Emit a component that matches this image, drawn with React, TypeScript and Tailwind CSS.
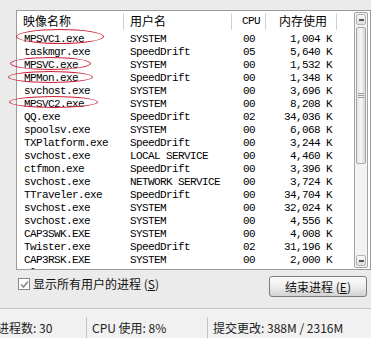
import React from "react";

const rows: [string, string, string, string][] = [
  ["MPSVC1.exe", "SYSTEM", "00", "1,004 K"],
  ["taskmgr.exe", "SpeedDrift", "05", "5,640 K"],
  ["MPSVC.exe", "SYSTEM", "00", "1,532 K"],
  ["MPMon.exe", "SpeedDrift", "00", "1,348 K"],
  ["svchost.exe", "SYSTEM", "00", "3,696 K"],
  ["MPSVC2.exe", "SYSTEM", "00", "8,208 K"],
  ["QQ.exe", "SpeedDrift", "02", "34,036 K"],
  ["spoolsv.exe", "SYSTEM", "00", "6,068 K"],
  ["TXPlatform.exe", "SpeedDrift", "00", "3,244 K"],
  ["svchost.exe", "LOCAL SERVICE", "00", "4,460 K"],
  ["ctfmon.exe", "SpeedDrift", "00", "3,396 K"],
  ["svchost.exe", "NETWORK SERVICE", "00", "3,724 K"],
  ["TTraveler.exe", "SpeedDrift", "00", "34,704 K"],
  ["svchost.exe", "SYSTEM", "00", "32,024 K"],
  ["svchost.exe", "SYSTEM", "00", "4,556 K"],
  ["CAP3SWK.EXE", "SYSTEM", "00", "4,008 K"],
  ["Twister.exe", "SpeedDrift", "02", "31,196 K"],
  ["CAP3RSK.EXE", "SYSTEM", "00", "2,000 K"],
  ["alg.exe", "NETWORK SERVICE", "00", "3,456 K"],
];

const mono = "font-['Liberation_Mono',monospace] text-[11px] tracking-[-0.6px]";
const cjk = "font-['Noto_Sans_CJK_SC',sans-serif]";

// red hand-drawn rings around the suspicious processes
const rings = [
  "left-[16px] top-[29px] w-[88px] h-[15px]",
  "left-[10px] top-[57px] w-[81px] h-[13px]",
  "left-[8px] top-[71px] w-[85px] h-[12px]",
  "left-[9px] top-[96px] w-[89px] h-[12px]",
];

function Scrollbar() {
  return (
    <div className="my-[1px] mr-[2px] flex w-[14px] flex-col rounded-[2px] border border-[#a4a4a4] bg-[#f3f3f3] px-[1px]">
      <div className="mt-[1px] flex h-[11px] items-center justify-center rounded-[2px] border border-[#b4b4b4] bg-gradient-to-b from-[#fafafa] to-[#dcdcdc]">
        <div className="h-[2px] w-[5px] bg-[#555]" />
      </div>
      <div className="mt-[2px] flex h-[137px] items-center justify-center rounded-[2px] border border-[#a8a8a8] bg-gradient-to-r from-[#e4e4e4] via-[#f8f8f8] to-[#d6d6d6]">
        <div className="flex flex-col gap-[1px]">
          <div className="h-px w-[6px] bg-[#9a9a9a]" />
          <div className="h-px w-[6px] bg-[#9a9a9a]" />
          <div className="h-px w-[6px] bg-[#9a9a9a]" />
        </div>
      </div>
      <div className="flex-1" />
      <div className="mb-[1px] flex h-[11px] items-center justify-center rounded-[2px] border border-[#b4b4b4] bg-gradient-to-b from-[#fafafa] to-[#dcdcdc]">
        <div className="h-[2px] w-[5px] bg-[#555]" />
      </div>
    </div>
  );
}

export default function App() {
  return (
    <div className="relative flex h-[338px] w-[371px] flex-col overflow-hidden bg-[#ebebeb] text-black">
      <div className="ml-[16px] mt-[10px] flex h-[260px] w-[355px] border border-[#9c9c9c] bg-white">
        <div className="flex w-[337px] flex-col overflow-hidden">
          <div className="flex h-[20px] shrink-0 items-center">
            <div className={`${cjk} flex h-[17px] w-[107px] items-center border-r border-[#d2d2d2] pl-[6px] text-[12px]`}>映像名称</div>
            <div className={`${cjk} flex h-[17px] w-[108px] items-center border-r border-[#d2d2d2] pl-[6px] text-[12px]`}>用户名</div>
            <div className={`${mono} flex h-[17px] w-[34px] items-center border-r border-[#d2d2d2] pl-[10px]`}>CPU</div>
            <div className={`${cjk} flex h-[17px] w-[71px] items-center justify-end border-r border-[#d2d2d2] pr-[9px] text-[12px]`}>内存使用</div>
          </div>
          <div className="h-[2px] shrink-0" />
          {rows.map((r, i) => (
            <div key={i} className={`${mono} flex h-[13px] shrink-0 items-center leading-[13px]`}>
              <div className="w-[107px] whitespace-nowrap pl-[7px]">{r[0]}</div>
              <div className="w-[108px] whitespace-nowrap pl-[6px]">{r[1]}</div>
              <div className="w-[34px] pl-[11px]">{r[2]}</div>
              <div className="w-[71px] pr-[5px] text-right whitespace-nowrap">{r[3]}</div>
            </div>
          ))}
        </div>
        <Scrollbar />
      </div>

      <div className="flex h-[38px] pl-[18px] pr-[4px]">
        <div className="mt-[8px] flex h-[12px] items-center gap-[3px]">
          <div className="flex h-[12px] w-[12px] items-center justify-center border border-[#8a8a8a] bg-white">
            <svg width="9" height="9" viewBox="0 0 9 9">
              <path d="M1 4.5 L3.5 7 L8 1.5" fill="none" stroke="#8a8a8a" strokeWidth="1.6" />
            </svg>
          </div>
          <span className={`${cjk} text-[12px] leading-[14px] text-[#111]`}>
            显示所有用户的进程 (<span className="underline">S</span>)
          </span>
        </div>
        <button className="ml-auto mt-[6px] flex h-[21px] w-[98px] items-center justify-center rounded-[3px] border border-[#7c7c7c] bg-gradient-to-b from-[#fbfbfb] via-[#eeeeee] to-[#d2d2d2]">
          <span className={`${cjk} text-[12px] leading-[14px] text-[#111]`}>
            结束进程 (<span className="underline">E</span>)
          </span>
        </button>
      </div>

      <div className={`${cjk} flex h-[30px] border-t border-[#c4c4c4] bg-[#f1f1f1] text-[12px] text-[#222]`}>
        <div className="-ml-[3px] flex w-[89px] items-end pb-[1px]">进程数: 30</div>
        <div className="mt-[8px] flex w-[121px] items-end border-l border-[#c4c4c4] pb-[1px] pl-[5px]">CPU 使用: 8%</div>
        <div className="mt-[8px] flex flex-1 items-end border-l border-[#c4c4c4] pb-[1px] pl-[5px]">提交更改: 388M / 2316M</div>
      </div>

      {rings.map((c, i) => (
        <div key={i} className={`absolute rounded-[50%] border border-[#cc1f36] ${c}`} />
      ))}
    </div>
  );
}
